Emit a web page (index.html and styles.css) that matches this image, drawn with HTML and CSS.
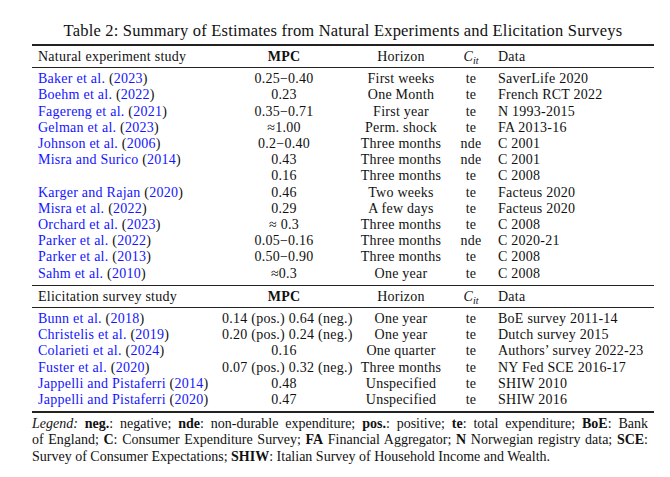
FILE: index.html
```html
<!DOCTYPE html>
<html lang="en">
<head>
  <meta charset="UTF-8" />
  <title>Table 2: Summary of Estimates</title>
  <link rel="stylesheet" href="styles.css">
</head>
<body>

  <div class="figure">
    <div class="caption">Table 2: Summary of Estimates from Natural Experiments and Elicitation Surveys</div>

    <table class="estimates">
      <colgroup>
        <col class="c-study">
        <col class="c-mpc">
        <col class="c-horizon">
        <col class="c-cit">
        <col class="c-data">
      </colgroup>

      <!-- Natural experiments -->
      <tbody>
        <tr class="head top">
          <td>Natural experiment study</td>
          <td class="mid"><b>MPC</b></td>
          <td class="mid">Horizon</td>
          <td class="mid"><i>C</i><sub>it</sub></td>
          <td class="data">Data</td>
        </tr>
        <tr class="first">
          <td><a href="#">Baker et al.</a> (<a href="#">2023</a>)</td>
          <td class="mid">0.25&minus;0.40</td>
          <td class="mid">First weeks</td>
          <td class="mid">te</td>
          <td class="data">SaverLife 2020</td>
        </tr>
        <tr>
          <td><a href="#">Boehm et al.</a> (<a href="#">2022</a>)</td>
          <td class="mid">0.23</td>
          <td class="mid">One Month</td>
          <td class="mid">te</td>
          <td class="data">French RCT 2022</td>
        </tr>
        <tr>
          <td><a href="#">Fagereng et al.</a> (<a href="#">2021</a>)</td>
          <td class="mid">0.35&minus;0.71</td>
          <td class="mid">First year</td>
          <td class="mid">te</td>
          <td class="data">N 1993-2015</td>
        </tr>
        <tr>
          <td><a href="#">Gelman et al.</a> (<a href="#">2023</a>)</td>
          <td class="mid">&asymp;1.00</td>
          <td class="mid">Perm. shock</td>
          <td class="mid">te</td>
          <td class="data">FA 2013-16</td>
        </tr>
        <tr>
          <td><a href="#">Johnson et al.</a> (<a href="#">2006</a>)</td>
          <td class="mid">0.2&minus;0.40</td>
          <td class="mid">Three months</td>
          <td class="mid">nde</td>
          <td class="data">C 2001</td>
        </tr>
        <tr>
          <td><a href="#">Misra and Surico</a> (<a href="#">2014</a>)</td>
          <td class="mid">0.43</td>
          <td class="mid">Three months</td>
          <td class="mid">nde</td>
          <td class="data">C 2001</td>
        </tr>
        <tr>
          <td></td>
          <td class="mid">0.16</td>
          <td class="mid">Three months</td>
          <td class="mid">te</td>
          <td class="data">C 2008</td>
        </tr>
        <tr>
          <td><a href="#">Karger and Rajan</a> (<a href="#">2020</a>)</td>
          <td class="mid">0.46</td>
          <td class="mid">Two weeks</td>
          <td class="mid">te</td>
          <td class="data">Facteus 2020</td>
        </tr>
        <tr>
          <td><a href="#">Misra et al.</a> (<a href="#">2022</a>)</td>
          <td class="mid">0.29</td>
          <td class="mid">A few days</td>
          <td class="mid">te</td>
          <td class="data">Facteus 2020</td>
        </tr>
        <tr>
          <td><a href="#">Orchard et al.</a> (<a href="#">2023</a>)</td>
          <td class="mid">&asymp; 0.3</td>
          <td class="mid">Three months</td>
          <td class="mid">te</td>
          <td class="data">C 2008</td>
        </tr>
        <tr>
          <td><a href="#">Parker et al.</a> (<a href="#">2022</a>)</td>
          <td class="mid">0.05&minus;0.16</td>
          <td class="mid">Three months</td>
          <td class="mid">nde</td>
          <td class="data">C 2020-21</td>
        </tr>
        <tr>
          <td><a href="#">Parker et al.</a> (<a href="#">2013</a>)</td>
          <td class="mid">0.50&minus;0.90</td>
          <td class="mid">Three months</td>
          <td class="mid">te</td>
          <td class="data">C 2008</td>
        </tr>
        <tr class="last">
          <td><a href="#">Sahm et al.</a> (<a href="#">2010</a>)</td>
          <td class="mid">&asymp;0.3</td>
          <td class="mid">One year</td>
          <td class="mid">te</td>
          <td class="data">C 2008</td>
        </tr>
      </tbody>

      <!-- Elicitation surveys -->
      <tbody>
        <tr class="head">
          <td>Elicitation survey study</td>
          <td class="mid"><b>MPC</b></td>
          <td class="mid">Horizon</td>
          <td class="mid"><i>C</i><sub>it</sub></td>
          <td class="data">Data</td>
        </tr>
        <tr class="first">
          <td><a href="#">Bunn et al.</a> (<a href="#">2018</a>)</td>
          <td class="mid">0.14 (pos.) 0.64 (neg.)</td>
          <td class="mid">One year</td>
          <td class="mid">te</td>
          <td class="data">BoE survey 2011-14</td>
        </tr>
        <tr>
          <td><a href="#">Christelis et al.</a> (<a href="#">2019</a>)</td>
          <td class="mid">0.20 (pos.) 0.24 (neg.)</td>
          <td class="mid">One year</td>
          <td class="mid">te</td>
          <td class="data">Dutch survey 2015</td>
        </tr>
        <tr>
          <td><a href="#">Colarieti et al.</a> (<a href="#">2024</a>)</td>
          <td class="mid">0.16</td>
          <td class="mid">One quarter</td>
          <td class="mid">te</td>
          <td class="data">Authors’ survey 2022-23</td>
        </tr>
        <tr>
          <td><a href="#">Fuster et al.</a> (<a href="#">2020</a>)</td>
          <td class="mid">0.07 (pos.) 0.32 (neg.)</td>
          <td class="mid">Three months</td>
          <td class="mid">te</td>
          <td class="data">NY Fed SCE 2016-17</td>
        </tr>
        <tr>
          <td><a href="#">Jappelli and Pistaferri</a> (<a href="#">2014</a>)</td>
          <td class="mid">0.48</td>
          <td class="mid">Unspecified</td>
          <td class="mid">te</td>
          <td class="data">SHIW 2010</td>
        </tr>
        <tr class="last bottom">
          <td><a href="#">Jappelli and Pistaferri</a> (<a href="#">2020</a>)</td>
          <td class="mid">0.47</td>
          <td class="mid">Unspecified</td>
          <td class="mid">te</td>
          <td class="data">SHIW 2016</td>
        </tr>
      </tbody>
    </table>

    <p class="legend">
      <i>Legend:</i> <b>neg.</b>: negative; <b>nde</b>: non-durable expenditure; <b>pos.</b>: positive; <b>te</b>: total expenditure; <b>BoE</b>: Bank of&nbsp;England; <b>C</b>: Consumer Expenditure Survey; <b>FA</b> Financial Aggregator; <b>N</b> Norwegian registry data; <b>SCE</b>: Survey of Consumer Expectations; <b>SHIW</b>: Italian Survey of Household Income and Wealth.
    </p>
  </div>

</body>
</html>
```

FILE: styles.css
```css
* {
  margin: 0;
  padding: 0;
  box-sizing: border-box;
}

body {
  background-color: #fff;
  color: #111;
  font-family: 'Liberation Serif', 'Times New Roman', serif;
  font-size: 14px;
  letter-spacing: 0.25px;
}

.figure {
  width: 622px;
  margin: 21px 0 0 32px;
}

.caption {
  font-size: 16.5px;
  letter-spacing: 0.2px;
  line-height: 20px;
  text-align: center;
  margin-bottom: 3px;
}

a {
  color: #1515ff;
  text-decoration: none;
}

/* table */

.estimates {
  width: 100%;
  table-layout: fixed;
  border-collapse: collapse;
}

.c-study { width: 190px; }
.c-mpc { width: 124px; }
.c-horizon { width: 110px; }
.c-cit { width: 30px; }
.c-data { width: 168px; }

.estimates td {
  padding: 0;
  line-height: 16.2px;
  white-space: nowrap;
  vertical-align: middle;
}

.estimates td:first-child {
  padding-left: 6px;
}

.estimates td.mid {
  text-align: center;
}

.estimates td.data {
  padding-left: 12px;
}

.estimates tr.head td {
  padding-top: 3px;
  padding-bottom: 2px;
  border-bottom: 1px solid #222;
}

.estimates tr.head.top td {
  border-top: 2px solid #222;
}

.estimates tr.first td {
  padding-top: 3px;
}

.estimates tr.last td {
  padding-bottom: 3px;
  border-bottom: 1px solid #222;
}

.estimates tr.last.bottom td {
  border-bottom: 2px solid #222;
}

sub {
  font-size: 10px;
  font-style: italic;
  line-height: 0;
  vertical-align: -3px;
  letter-spacing: 0;
}

/* legend */

.legend {
  width: 616px;
  margin-top: 3px;
  line-height: 16.2px;
  letter-spacing: 0;
  text-align: justify;
}
```
